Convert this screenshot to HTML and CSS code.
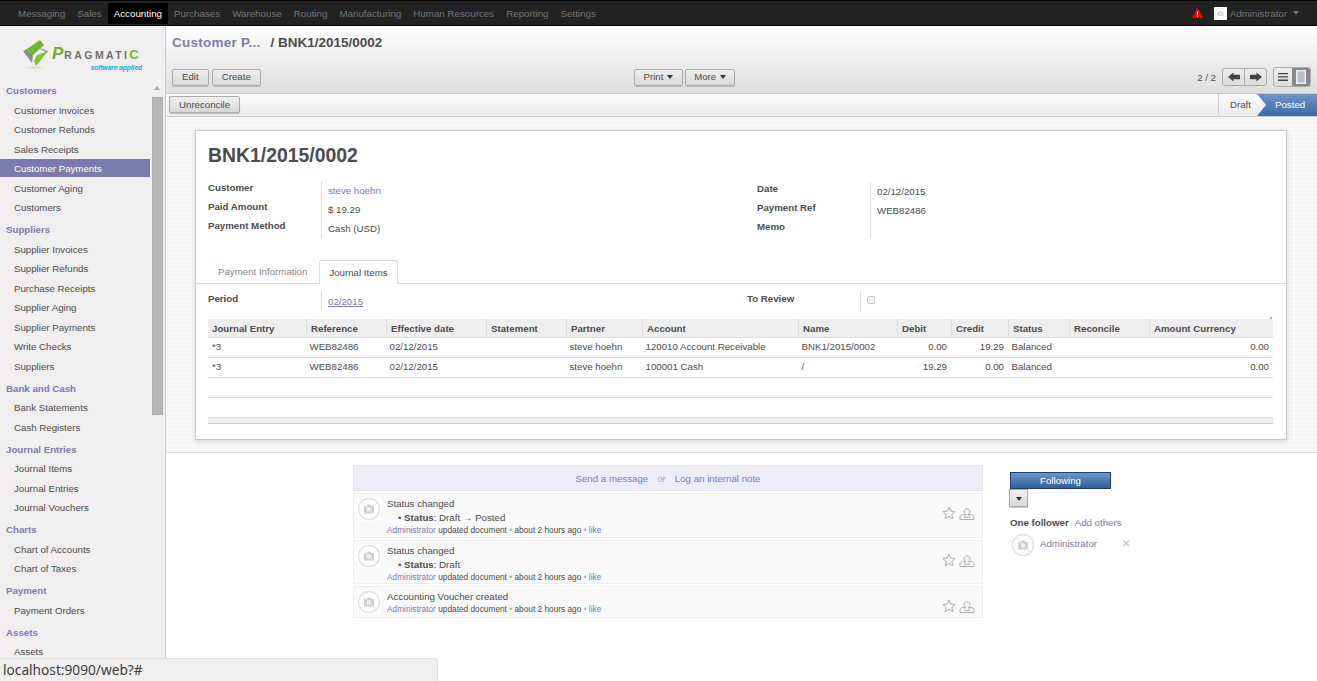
FILE: index.html
```html
<!DOCTYPE html>
<html lang="en">
<head>
<meta charset="utf-8">
<title>BNK1/2015/0002</title>
<link rel="stylesheet" href="styles.css">
</head>
<body>
<svg class="defs" width="0" height="0" aria-hidden="true">
  <symbol id="avatar" viewBox="0 0 24 24">
    <rect width="24" height="24" fill="#fff"/>
    <circle cx="12" cy="12" r="10.500" fill="none" stroke="#e2e2e2" stroke-width="1.400"/>
    <path d="M7 9h2.500l1-1.500h3l1 1.500H17v7.500H7z" fill="#cfcfcf"/>
    <circle cx="12" cy="12.500" r="2.200" fill="#f2f2f2"/>
    <path d="M5 5l14 14" stroke="#eeeeee" stroke-width="1"/>
  </symbol>
  <symbol id="star" viewBox="0 0 14 14">
    <path d="M7 1l1.800 4.100 4.300.4-3.300 2.800 1 4.400L7 10.400l-3.800 2.300 1-4.400L.9 5.500l4.300-.4z" fill="none" stroke="#adadad" stroke-width="1"/>
  </symbol>
  <symbol id="inbox" viewBox="0 0 16 14">
    <path d="M1 13.500V11C1 9.200 3 8.500 4.500 8.500h7C13 8.500 15 9.200 15 11v2.500z" fill="#fafafa" stroke="#adadad" stroke-width="1"/>
    <path d="M5.500 11.500c0-1.500.5-2.500 1.300-3a3 3 0 1 1 2.400 0c.8.500 1.300 1.500 1.300 3z" fill="#f4f4f4" stroke="#b5b5b5" stroke-width="1"/>
  </symbol>
</svg>

<header class="topbar">
  <nav class="topnav">
    <a class="topitem">Messaging</a>
    <a class="topitem">Sales</a>
    <a class="topitem topitem-active">Accounting</a>
    <a class="topitem">Purchases</a>
    <a class="topitem">Warehouse</a>
    <a class="topitem">Routing</a>
    <a class="topitem">Manufacturing</a>
    <a class="topitem">Human Resources</a>
    <a class="topitem">Reporting</a>
    <a class="topitem">Settings</a>
  </nav>
  <div class="topright">
    <svg class="alert" width="11" height="10" viewBox="0 0 12 11"><path d="M6 0l6 11H0z" fill="#f00"/><path d="M5.400 3.500h1.200v4H5.400zM5.400 8.300h1.200v1.200H5.400z" fill="#fff"/></svg>
    <svg class="topavatar" width="13" height="13"><use href="#avatar"/></svg>
    <span class="topuser">Administrator</span>
    <span class="caret caret-top"></span>
  </div>
</header>

<div class="shell">
  <aside class="sidebar">
    <div class="logo">
      <svg class="logomark" width="25" height="29" viewBox="0 0 25 29">
        <ellipse cx="12" cy="27.500" rx="9" ry="1.200" fill="#dcdcdc"/>
        <path d="M0 11l4-2 6 6-1 8-3-4z" fill="#8c8c8c"/>
        <path d="M14 7l11 4-1 2-7-4z" fill="#a0a0a0"/>
        <path d="M17 0l4 5-11 10-6-6z" fill="#6cb52d"/>
        <path d="M14 15l11-4-12 15-2-5z" fill="#7cc62f"/>
      </svg>
      <div class="logotext">
        <div class="logoname"><span class="logo-p">P</span>RAGMATI<span class="logo-c">C</span></div>
        <div class="logosub">software applied</div>
      </div>
    </div>
    <div class="menuwrap">
      <div class="menu">
        <div class="menuhead">Customers</div>
        <a class="menuitem">Customer Invoices</a>
        <a class="menuitem">Customer Refunds</a>
        <a class="menuitem">Sales Receipts</a>
        <a class="menuitem menuitem-active">Customer Payments</a>
        <a class="menuitem">Customer Aging</a>
        <a class="menuitem">Customers</a>
        <div class="menuhead">Suppliers</div>
        <a class="menuitem">Supplier Invoices</a>
        <a class="menuitem">Supplier Refunds</a>
        <a class="menuitem">Purchase Receipts</a>
        <a class="menuitem">Supplier Aging</a>
        <a class="menuitem">Supplier Payments</a>
        <a class="menuitem">Write Checks</a>
        <a class="menuitem">Suppliers</a>
        <div class="menuhead">Bank and Cash</div>
        <a class="menuitem">Bank Statements</a>
        <a class="menuitem">Cash Registers</a>
        <div class="menuhead">Journal Entries</div>
        <a class="menuitem">Journal Items</a>
        <a class="menuitem">Journal Entries</a>
        <a class="menuitem">Journal Vouchers</a>
        <div class="menuhead">Charts</div>
        <a class="menuitem">Chart of Accounts</a>
        <a class="menuitem">Chart of Taxes</a>
        <div class="menuhead">Payment</div>
        <a class="menuitem">Payment Orders</a>
        <div class="menuhead">Assets</div>
        <a class="menuitem">Assets</a>
      </div>
      <div class="scrollbar">
        <div class="scrollup"></div>
        <div class="scrollthumb"></div>
        <div class="scrolldown"></div>
      </div>
    </div>
  </aside>

  <main class="content">
    <section class="viewhead">
      <h1 class="crumbs"><a class="crumblink">Customer P...</a><span class="crumbsep">/ BNK1/2015/0002</span></h1>
      <div class="toolbar">
        <div class="tools-left">
          <button class="btn">Edit</button>
          <button class="btn">Create</button>
        </div>
        <div class="tools-mid">
          <button class="btn">Print <span class="caret"></span></button>
          <button class="btn">More <span class="caret"></span></button>
        </div>
        <div class="tools-right">
          <span class="pager">2 / 2</span>
          <div class="btngroup">
            <button class="gbtn"><svg width="12" height="10" viewBox="0 0 13 10"><path d="M0 5l6-5v2.500h7v5H6V10z" fill="#444"/></svg></button>
            <button class="gbtn"><svg width="12" height="10" viewBox="0 0 13 10"><path d="M13 5L7 0v2.500H0v5h7V10z" fill="#444"/></svg></button>
          </div>
          <div class="viewswitch">
            <button class="vbtn"><svg width="10" height="8" viewBox="0 0 10 8"><path d="M0 0h10v1.300H0zM0 3.300h10v1.300H0zM0 6.600h10v1.300H0z" fill="#444"/></svg></button>
            <button class="vbtn vbtn-on"><svg width="10" height="14" viewBox="0 0 10 14"><rect x=".7" y=".7" width="8.600" height="12.600" fill="#b9c0c8" stroke="#eef3f8" stroke-width="1.400"/></svg></button>
          </div>
        </div>
      </div>
    </section>

    <section class="statusbar">
      <button class="btn btn-status">Unreconcile</button>
      <div class="stages">
        <span class="stage">Draft</span>
        <span class="stage stage-on">Posted</span>
      </div>
    </section>

    <section class="formbg">
      <div class="sheet">
        <h2 class="docname">BNK1/2015/0002</h2>
        <div class="groups">
          <div class="group">
            <div class="lbl">Customer</div><div class="val"><a class="link">steve hoehn</a></div>
            <div class="lbl">Paid Amount</div><div class="val">$ 19.29</div>
            <div class="lbl">Payment Method</div><div class="val">Cash (USD)</div>
          </div>
          <div class="group group-right">
            <div class="lbl">Date</div><div class="val">02/12/2015</div>
            <div class="lbl">Payment Ref</div><div class="val">WEB82486</div>
            <div class="lbl">Memo</div><div class="val"></div>
          </div>
        </div>
        <div class="tabs">
          <a class="tab">Payment Information</a>
          <a class="tab tab-on">Journal Items</a>
        </div>
        <div class="periodrow">
          <div class="lbl lbl-period">Period</div><div class="val val-period"><a class="link link-u">02/2015</a></div>
          <div class="lbl lbl-review">To Review</div><div class="val val-review"><span class="check"></span></div>
        </div>
        <div class="tablewrap">
          <table class="grid">
            <colgroup>
              <col class="c1"><col class="c2"><col class="c3"><col class="c4"><col class="c5"><col class="c6"><col class="c7"><col class="c8"><col class="c9"><col class="c10"><col class="c11"><col class="c12">
            </colgroup>
            <thead>
              <tr><th>Journal Entry</th><th>Reference</th><th>Effective date</th><th>Statement</th><th>Partner</th><th>Account</th><th>Name</th><th>Debit</th><th>Credit</th><th>Status</th><th>Reconcile</th><th>Amount Currency</th></tr>
            </thead>
            <tbody>
              <tr><td>*3</td><td>WEB82486</td><td>02/12/2015</td><td></td><td>steve hoehn</td><td>120010 Account Receivable</td><td>BNK1/2015/0002</td><td class="num">0.00</td><td class="num">19.29</td><td>Balanced</td><td></td><td class="num">0.00</td></tr>
              <tr><td>*3</td><td>WEB82486</td><td>02/12/2015</td><td></td><td>steve hoehn</td><td>100001 Cash</td><td>/</td><td class="num">19.29</td><td class="num">0.00</td><td>Balanced</td><td></td><td class="num">0.00</td></tr>
              <tr class="blank"><td colspan="12"></td></tr>
              <tr class="blank"><td colspan="12"></td></tr>
            </tbody>
            <tfoot><tr><td colspan="12"></td></tr></tfoot>
          </table>
        </div>
      </div>
    </section>

    <section class="chatter">
      <div class="thread">
        <div class="compose"><a class="link">Send a message</a><span class="or">or</span><a class="link">Log an internal note</a></div>
        <article class="msg">
          <svg class="msgavatar" width="24" height="24"><use href="#avatar"/></svg>
          <div class="msgbody">
            <div class="msgtitle">Status changed</div>
            <div class="msgchange">• <b>Status</b>: Draft → Posted</div>
            <div class="msgmeta"><a class="link">Administrator</a> updated document <span class="dot">•</span> about 2 hours ago <span class="dot">•</span> <a class="link">like</a></div>
          </div>
          <div class="msgicons"><svg class="icostar" width="14" height="14"><use href="#star"/></svg><svg width="16" height="14"><use href="#inbox"/></svg></div>
        </article>
        <article class="msg">
          <svg class="msgavatar" width="24" height="24"><use href="#avatar"/></svg>
          <div class="msgbody">
            <div class="msgtitle">Status changed</div>
            <div class="msgchange">• <b>Status</b>: Draft</div>
            <div class="msgmeta"><a class="link">Administrator</a> updated document <span class="dot">•</span> about 2 hours ago <span class="dot">•</span> <a class="link">like</a></div>
          </div>
          <div class="msgicons"><svg class="icostar" width="14" height="14"><use href="#star"/></svg><svg width="16" height="14"><use href="#inbox"/></svg></div>
        </article>
        <article class="msg">
          <svg class="msgavatar" width="24" height="24"><use href="#avatar"/></svg>
          <div class="msgbody">
            <div class="msgtitle">Accounting Voucher created</div>
            <div class="msgmeta"><a class="link">Administrator</a> updated document <span class="dot">•</span> about 2 hours ago <span class="dot">•</span> <a class="link">like</a></div>
          </div>
          <div class="msgicons"><svg class="icostar" width="14" height="14"><use href="#star"/></svg><svg width="16" height="14"><use href="#inbox"/></svg></div>
        </article>
      </div>
      <div class="followers">
        <button class="follow">Following</button>
        <button class="followmenu"><span class="caret"></span></button>
        <div class="followhead"><b>One follower</b><a class="link">Add others</a></div>
        <div class="follower">
          <svg width="24" height="24"><use href="#avatar"/></svg>
          <a class="link">Administrator</a>
          <span class="remove">✕</span>
        </div>
      </div>
    </section>
  </main>
</div>

<div class="urlhint">localhost:9090/web?#</div>
</body>
</html>
```

FILE: styles.css
```css
* { box-sizing: border-box; }
html, body { margin: 0; height: 681px; overflow: hidden; }
body { font-family: "Liberation Sans", Arial, sans-serif; font-size: 9.700px; color: #4c4c4c; background: #fff; }
a { text-decoration: none; cursor: pointer; }
button { font-family: inherit; }
.defs { position: absolute; }

.topbar { height: 26px; background: #222; border-top: 1px solid #000; border-bottom: 1px solid #000; display: flex; justify-content: space-between; }
.topnav { display: flex; padding-left: 12px; }
.topitem { color: #777; padding: 0 6px; line-height: 21px; height: 21px; margin-top: 2px; font-size: 9.770px; }
.topitem-active { background: #000; color: #fff; }
.topright { display: flex; align-items: center; padding-right: 18px; }
.alert { margin-right: 11px; }
.topavatar { margin-right: 3px; }
.topuser { color: #777; margin-right: 5px; }
.caret { display: inline-block; width: 0; height: 0; border-left: 3.500px solid transparent; border-right: 3.500px solid transparent; border-top: 4px solid #333; vertical-align: middle; margin-left: 1px; }
.caret-top { border-top-color: #777; }

.shell { display: flex; height: 655px; }
.sidebar { width: 166px; flex: none; background: #f0eeee; border-right: 1px solid #c8c8c8; display: flex; flex-direction: column; overflow: hidden; }
.logo { height: 52.750px; flex: none; padding: 14px 0 0 23px; display: flex; }
.logomark { flex: none; }
.logotext { margin-left: 4px; padding-top: 8px; width: 90px; }
.logoname { font-size: 10.500px; font-weight: bold; letter-spacing: 2.400px; color: #6e6e6e; line-height: 12px; white-space: nowrap; }
.logo-p { color: #6cb52d; font-size: 17px; font-style: italic; letter-spacing: 1px; }
.logo-c { color: #6cb52d; font-size: 13px; }
.logosub { font-size: 6.500px; font-weight: bold; font-style: italic; color: #19a3e8; text-align: right; line-height: 7px; margin-top: 3px; }
.menuwrap { display: flex; flex: 1; min-height: 0; }
.menu { width: 150px; flex: none; }
.menuhead { font-weight: bold; color: #7c7bad; padding: 2.500px 0 0 6px; height: 22px; line-height: 19.500px; }
.menuitem { display: block; height: 19.500px; line-height: 19.500px; padding-left: 14px; color: #4c4c4c; }
.menuitem-active { background: linear-gradient(#7c7bad, #7c7bad) 0 0 / 100% 18px no-repeat; color: #fff; }
.scrollbar { width: 11px; margin-left: 2px; padding-top: 4.250px; flex: none; display: flex; flex-direction: column; }
.scrollup { height: 14px; flex: none; position: relative; }
.scrollup::after { content: ""; position: absolute; left: 2px; top: 3px; border-left: 3.500px solid transparent; border-right: 3.500px solid transparent; border-bottom: 4px solid #aaa; }
.scrollthumb { height: 318px; flex: none; background: #b8b8b8; border: 1px solid #adadad; }
.scrolldown { height: 2px; width: 7px; margin: 244px 0 0 2px; flex: none; background: #555; }

.content { flex: 1; min-width: 0; }
.viewhead { height: 68px; background: linear-gradient(#fff, #dedede); border-bottom: 1px solid #c8c8c8; padding: 8px 6px 0 6px; }
.crumbs { margin: 0; font-size: 13.500px; font-weight: bold; color: #4c4c4c; line-height: 18px; height: 33px; }
.crumblink { color: #7c7bad; letter-spacing: .25px; }
.crumbsep { margin-left: 10px; }
.toolbar { display: grid; grid-template-columns: 462px auto 1fr; align-items: center; }
.tools-left { display: flex; gap: 3px; }
.tools-mid { display: flex; gap: 2px; }
.tools-mid .btn { padding: 0 8.500px; }
.tools-right { display: flex; justify-content: flex-end; align-items: center; }
.btn { height: 17px; padding: 0 9px; font-size: 9.700px; color: #4c4c4c; background: linear-gradient(#efefef, #d8d8d8); border: 1px solid #aaa; border-radius: 2px; box-shadow: 0 1px 1px rgba(0,0,0,.18); line-height: 14px; }
.pager { margin-right: 6px; }
.btngroup { display: flex; height: 18px; width: 45px; border: 1px solid #aaa; border-radius: 3px; background: linear-gradient(#efefef, #dcdcdc); }
.gbtn { width: 22px; padding: 0; border: 0; background: none; display: flex; align-items: center; justify-content: center; }
.gbtn + .gbtn { border-left: 1px solid #aaa; }
.viewswitch { display: flex; margin-left: 6px; height: 20px; width: 38px; border: 1px solid #aaa; border-radius: 3px; overflow: hidden; background: linear-gradient(#efefef, #dcdcdc); }
.vbtn { width: 18px; padding: 0; border: 0; background: none; display: flex; align-items: center; justify-content: center; }
.vbtn-on { background: #888; }

.statusbar { height: 23px; background: linear-gradient(#fdfdfd, #eaeaea); border-bottom: 1px solid #ccc; display: flex; justify-content: space-between; padding-left: 3px; }
.btn-status { margin-top: 2px; padding: 0 9px; }
.stages { display: flex; border-left: 1px solid #ccc; }
.stage { padding: 0 5px 0 11px; width: 38px; line-height: 21px; height: 22px; background: linear-gradient(#fdfdfd, #eaeaea); }
.stage-on { width: 60px; padding-left: 18px; color: #fff; background: linear-gradient(#6e96c6, #3a6aa8); clip-path: polygon(0 0, 100% 0, 100% 100%, 0 100%, 9px 50%); }

.formbg { height: 336px; padding: 13px 30px 0 29px; background-color: #f8f8f8; background-image: radial-gradient(#f3f3f3 1px, transparent 1px); background-size: 4px 4px; border-bottom: 1px solid #ddd; }
.sheet { height: 310px; background: #fff; border: 1px solid #c8c8c8; box-shadow: 0 2px 5px rgba(0,0,0,.12); }
.docname { margin: 0; font-size: 19.400px; font-weight: bold; color: #4c4c4c; line-height: 24px; padding: 12px 0 0 12px; height: 50px; }
.groups { display: flex; padding-left: 12px; height: 60px; }
.group { display: grid; grid-template-columns: 113px 1fr; width: 549px; grid-auto-rows: 19px; }
.group-right { padding-top: .5px; width: 500px; }
.lbl { font-weight: bold; line-height: 14px; }
.val { border-left: 1px solid #ddd; padding-left: 6px; line-height: 19px; }
.link { color: #7c7bad; }
.link-u { text-decoration: underline; }
.tabs { display: flex; margin-top: 19px; padding-left: 11px; height: 24px; border-bottom: 1px solid #ddd; }
.tab { height: 24px; padding: 0 11px; line-height: 23px; color: #888; }
.tab-on { color: #4c4c4c; background: #fff; border: 1px solid #ddd; border-bottom: 0; border-radius: 3px 3px 0 0; padding: 0 9px; margin-left: 1px; }
.periodrow { display: grid; grid-template-columns: 113px 426px 113px 1fr; padding: 7px 0 0 12px; grid-auto-rows: 20px; }
.lbl-period, .lbl-review { line-height: 15px; }
.val-period { line-height: 21px; }
.check { display: block; width: 8px; height: 8px; margin-top: 5px; border: 1px solid #ccc; border-radius: 2px; background: #f5f5f5; }
.tablewrap { padding: 8px 14px 0 12px; position: relative; }
.tablewrap::before { content: ""; position: absolute; right: 14px; top: 6px; width: 2px; height: 2px; background: #aaa; }
.grid { width: 1065px; table-layout: fixed; border-collapse: collapse; }
.c1 { width: 98px; } .c2 { width: 80px; } .c3 { width: 100px; } .c4 { width: 80px; } .c5 { width: 76px; } .c6 { width: 156px; } .c7 { width: 99px; } .c8 { width: 54px; } .c9 { width: 57px; } .c10 { width: 61px; } .c11 { width: 80px; } .c12 { width: 124px; }
.grid th { background: #eee; height: 18px; padding: 1px 4px 0 4.500px; text-align: left; font-weight: bold; border-bottom: 1px solid #ddd; border-left: 1px solid #ddd; color: #4c4c4c; white-space: nowrap; overflow: hidden; }
.grid th:first-child { border-left: 0; padding-left: 4px; }
.grid td { height: 20px; padding: 0 3px 1px 3.500px; border-bottom: 1px solid #ddd; white-space: nowrap; overflow: hidden; }
.grid td:first-child { padding-left: 4px; }
.grid td.num { text-align: right; padding-right: 4px; }
.grid tfoot td { height: 6px; padding: 0; background: #eee; border-top: 1px solid #ccc; border-bottom: 1px solid #ccc; }

.chatter { display: flex; padding: 12px 0 0 187px; background: #fff; }
.thread { width: 630px; flex: none; }
.compose { height: 26px; background: #ecedf5; border: 1px solid #e4e4ee; display: flex; justify-content: center; align-items: center; gap: 9px; margin-bottom: 2px; }
.or { color: #aaa; }
.msg { display: flex; min-height: 32px; background: #f9f9f9; border: 1px solid #eee; margin-bottom: 2px; padding: 3px 0 0 3px; }
.msgavatar { flex: none; }
.msgbody { margin-left: 6px; flex: 1; }
.msgtitle { line-height: 14px; }
.msgchange { line-height: 14px; padding-left: 11px; }
.msgmeta { font-size: 8.300px; line-height: 11.500px; color: #4c4c4c; white-space: nowrap; }
.dot { color: #aaa; }
.msgicons { display: flex; gap: 3px; align-items: flex-start; padding: 9px 7px 0 0; }
.followers { margin-left: 27px; width: 140px; padding-top: 7px; }
.follow { display: block; width: 101px; height: 17px; padding: 0; font-size: 9.700px; color: #fff; background: linear-gradient(#6e96c6, #2f5f9f); border: 1px solid #1d3f6f; }
.followmenu { display: block; width: 19px; height: 18px; margin-left: -1px; padding: 0; background: linear-gradient(#f0f0f0, #d8d8d8); border: 1px solid #aaa; box-shadow: 0 1px 1px rgba(0,0,0,.2); }
.followhead { margin-top: 9px; display: flex; gap: 6px; line-height: 14px; }
.followhead b { color: #4c4c4c; }
.follower { display: flex; align-items: center; margin-top: 2px; height: 26px; padding-left: 1px; }
.follower .link { margin: 0 0 3px 5px; }
.remove { color: #ccc; margin: 0 0 3px 25px; font-size: 10px; font-weight: bold; }

.urlhint { position: absolute; left: 0; bottom: 0; width: 438px; height: 23px; background: #f1efee; border: 1px solid #ddd; border-width: 1px 1px 0 0; border-radius: 0 4px 0 0; font-family: "Noto Sans", "Open Sans", sans-serif; font-size: 13.700px; line-height: 22px; padding-left: 3px; color: #3c3c3c; }
```
